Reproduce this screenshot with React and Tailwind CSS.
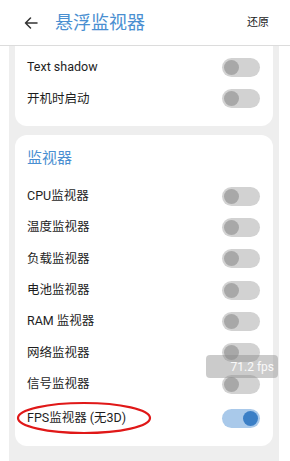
import React from "react";

const font = { fontFamily: 'Roboto, "Noto Sans CJK SC", sans-serif' };

function Toggle({ on = false }) {
  return (
    <div
      className={`w-[38px] h-[19px] rounded-full flex items-center px-[2px] ${
        on ? "bg-[#a9c9ea] justify-end" : "bg-[#d2d2d2] justify-start"
      }`}
    >
      <div
        className={`w-[15px] h-[15px] rounded-full ${
          on ? "bg-[#3b7fc6]" : "bg-[#a8a8a8]"
        }`}
      />
    </div>
  );
}

function Row({ label, on, className = "h-[31.33px]" }) {
  return (
    <div className={`flex items-center justify-between pl-[12px] pr-[13px] ${className}`}>
      <span className="text-[12.5px] text-[#1e1e1e]">{label}</span>
      <Toggle on={on} />
    </div>
  );
}

export default function App() {
  const monitors = [
    "CPU监视器",
    "温度监视器",
    "负载监视器",
    "电池监视器",
    "RAM 监视器",
    "网络监视器",
    "信号监视器",
  ];

  return (
    <div className="w-[290px] h-[461px] bg-white overflow-hidden relative" style={font}>
      <div className="h-[46px] flex items-center border-b border-[#dcdcdc] pr-[21px]">
        <div className="w-[55px] flex justify-center pl-[6px]">
          <svg width="14" height="12" viewBox="0 0 14 12" fill="none" stroke="#333" strokeWidth="1.5" strokeLinecap="round" strokeLinejoin="round">
            <path d="M13 6H1.5M6.5 1L1.5 6l5 5" />
          </svg>
        </div>
        <span className="text-[18px] text-[#4a8fd1] leading-none">悬浮监视器</span>
        <span className="ml-auto text-[11px] text-[#222] mt-[2px]">还原</span>
      </div>

      <div className="mx-[9px] w-[270px] h-[415px] bg-[#eeeeee] px-[6px] flex flex-col gap-[9px]">
        <div className="bg-white rounded-b-[12px] pt-[6px] pb-[11px]">
          <Row label="Text shadow" />
          <Row label="开机时启动" />
        </div>

        <div className="bg-white rounded-[12px] pt-[12px] pb-[11px]">
          <div className="h-[24px] flex items-center pl-[12px] text-[15px] text-[#4a8fd1] mb-[10px]">
            监视器
          </div>
          {monitors.map((m) => (
            <Row key={m} label={m} />
          ))}
          <Row label="FPS监视器 (无3D)" on className="h-[35px] pt-[2px]" />
        </div>
      </div>

      <div className="absolute left-[206px] top-[355px] w-[72px] h-[23px] rounded-[4px] bg-[rgba(140,140,140,0.45)] flex items-center justify-end pr-[4px]">
        <span className="text-[12px] text-white/90">71.2 fps</span>
      </div>

      <svg className="absolute left-[14px] top-[399px]" width="140" height="38" viewBox="0 0 140 38">
        <ellipse cx="70" cy="19" rx="66" ry="15" fill="none" stroke="#e01818" strokeWidth="2.2" />
      </svg>
    </div>
  );
}
